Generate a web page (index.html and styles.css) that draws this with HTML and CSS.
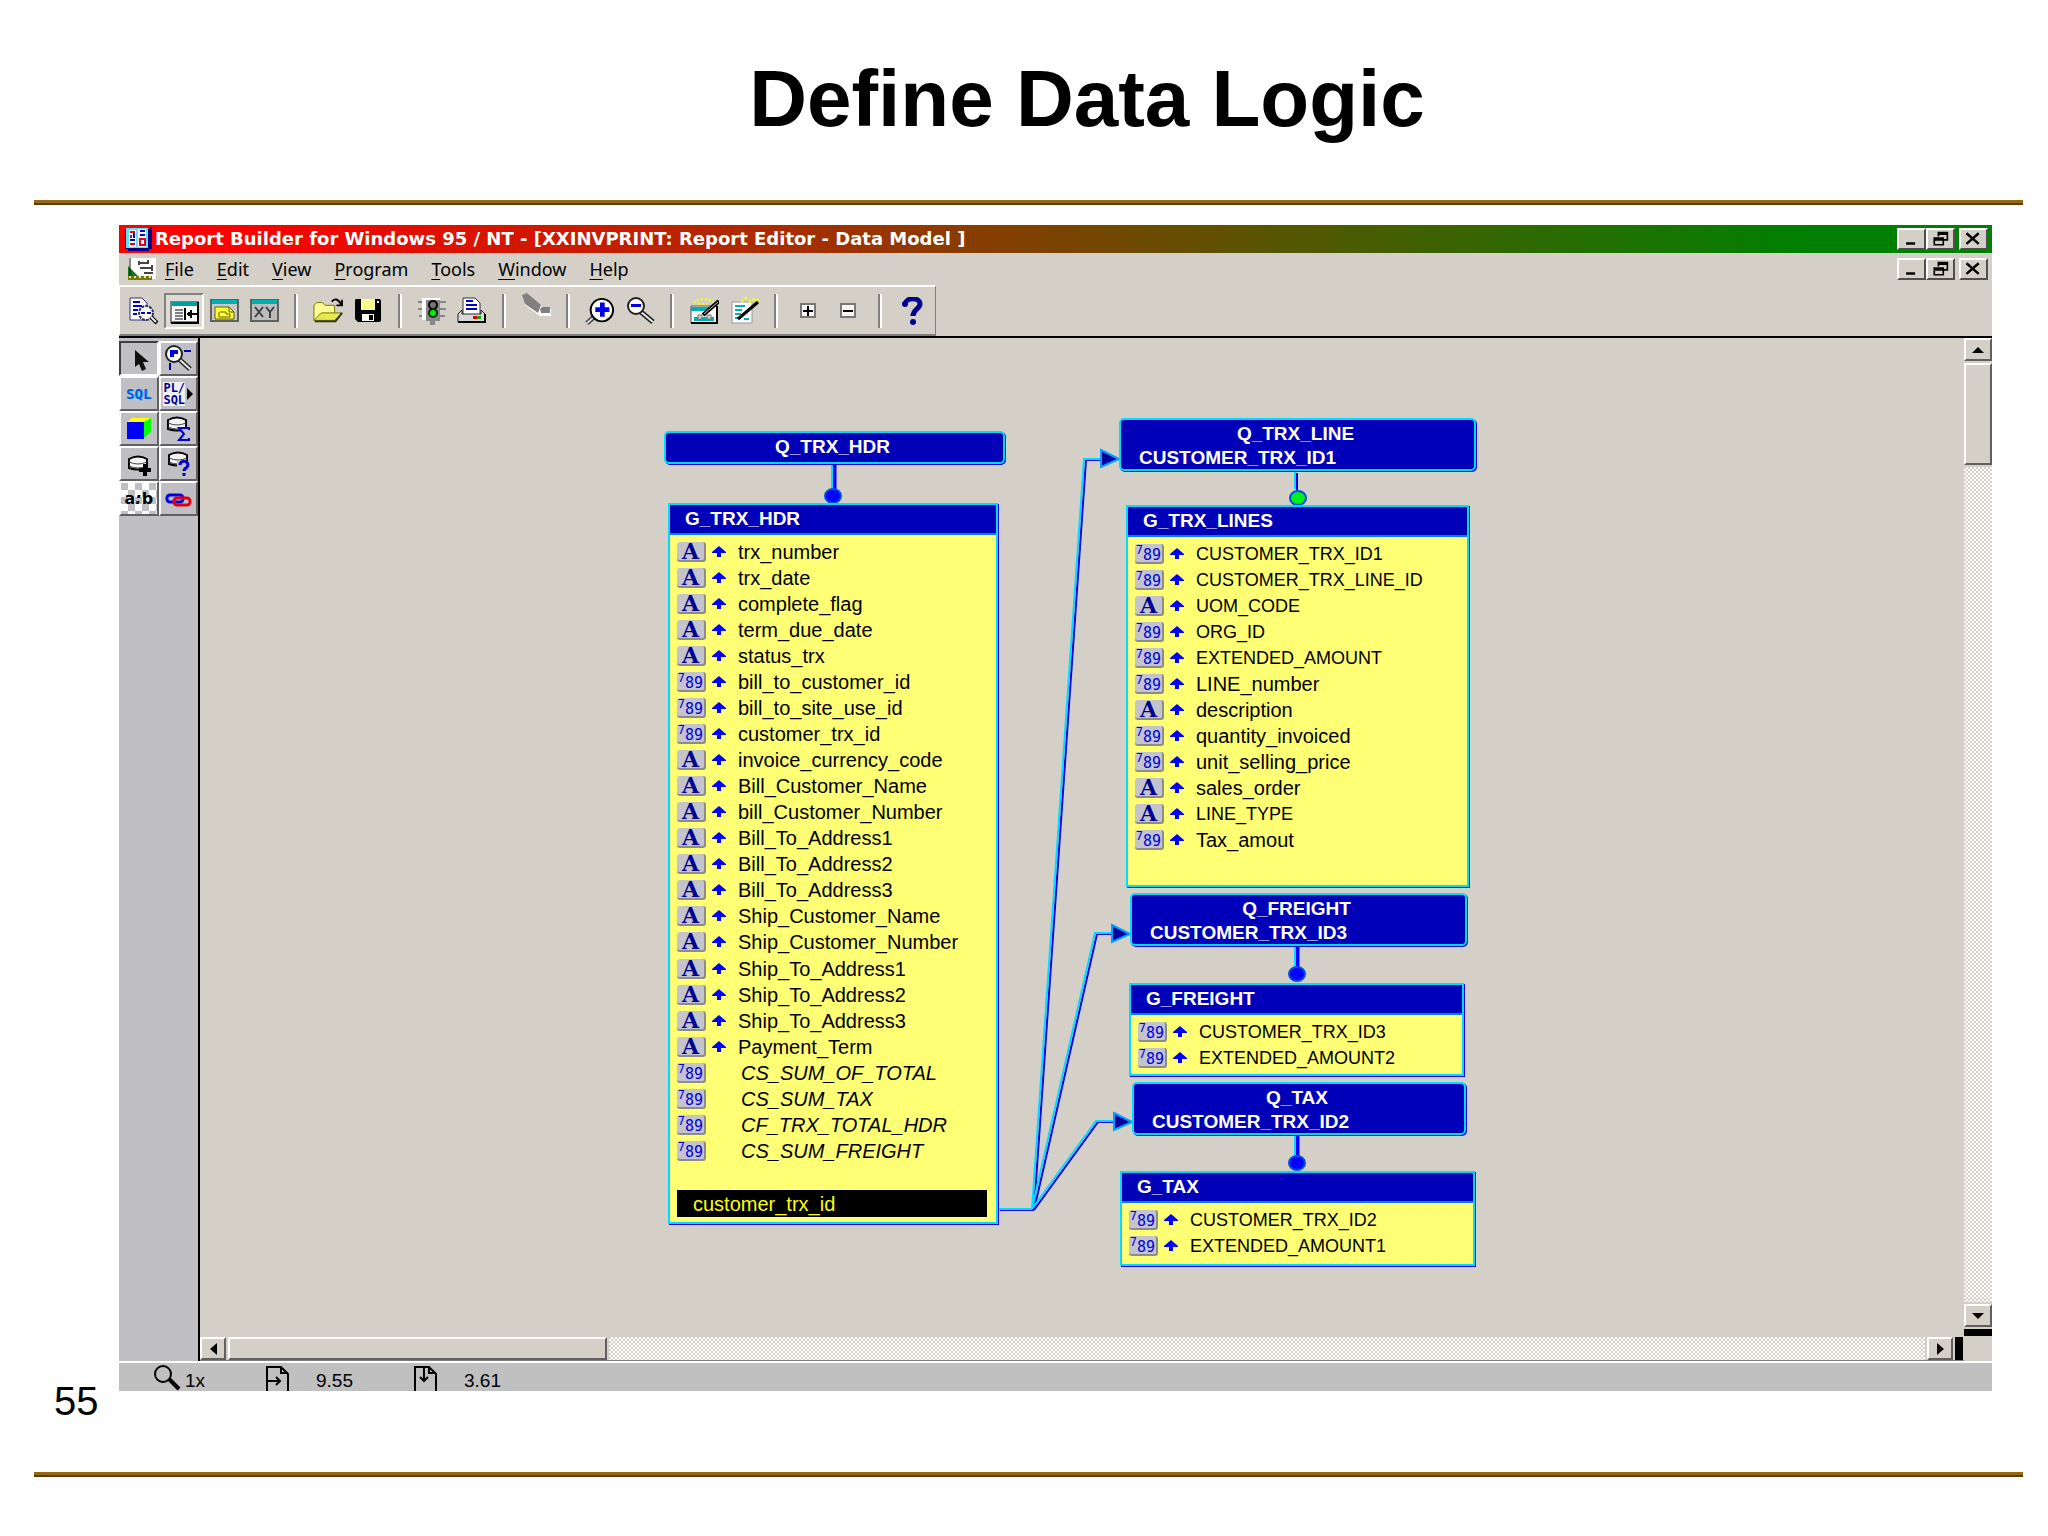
FILE: index.html
```html
<!DOCTYPE html>
<html lang="en">
<head>
    <meta charset="UTF-8">
    <meta name="viewport" content="width=device-width, initial-scale=1.0">
    <title>Define Data Logic</title>
    <link rel="stylesheet" href="styles.css">
</head>
<body>
    <header class="slide-header">
        <h1>Define Data Logic</h1>
    </header>
    <hr class="rule">

    <main class="slide-body">
        <p class="slide-number">55</p>

        <section class="window">
            <div class="title-bar">
                <svg class="app-icon" viewBox="0 0 30 26">
                    <path fill="#000080" d="M2 3h24v-2h3v22h-3v2H5v-2H2z"/>
                    <path fill="#5ce1ff" d="M3 2h22v20H3z"/>
                    <path fill="#fff" d="M6 4h7v17H6zM15 3h8v18h-8z"/>
                    <path stroke="#e00020" stroke-width="2" fill="none" d="M7 6h5M7 18h5M17 13h5v6h-5zM8 9v3"/>
                    <path stroke="#0000d0" stroke-width="2" fill="none" d="M7 14h5M17 5h5M17 9h5M11 7v5"/>
                </svg>
                <h2>Report Builder for Windows 95 / NT - [XXINVPRINT: Report Editor - Data Model ]</h2>
                <div class="window-buttons">
                    <button aria-label="Minimize"><svg viewBox="0 0 28 22"><path d="M8 15h11v3H8z"/></svg></button>
                    <button aria-label="Restore"><svg viewBox="0 0 28 22"><path fill="none" stroke="#000" stroke-width="2" d="M12 8V3h11v9h-5M7 10h11v8H7zM12 5h11M7 12h11"/></svg></button>
                    <button class="close" aria-label="Close"><svg viewBox="0 0 28 22"><path fill="none" stroke="#000" stroke-width="3" d="M6 4l15 13M21 4L6 17"/></svg></button>
                </div>
            </div>

            <div class="menu-bar">
                <svg class="doc-icon" viewBox="0 0 30 24">
                    <path fill="#fff" d="M3 1h27v21H3z"/>
                    <path fill="#087a20" d="M2 9l10 10v4H2z"/>
                    <path fill="#7a7a00" d="M2 19h24v4H2z"/>
                    <path stroke="#111" stroke-width="1" fill="none" d="M4 1v18"/>
                    <path stroke="#444" stroke-width="2" fill="none" d="M13 4v4M12 6h10M14 11h13M18 16h9M22 3v4M26 8v6"/>
                    <path stroke="#ddd" stroke-width="2" stroke-dasharray="2 3" d="M3 20h22"/>
                </svg>
                <nav>
                    <a href="#"><u>F</u>ile</a>
                    <a href="#"><u>E</u>dit</a>
                    <a href="#"><u>V</u>iew</a>
                    <a href="#"><u>P</u>rogram</a>
                    <a href="#"><u>T</u>ools</a>
                    <a href="#"><u>W</u>indow</a>
                    <a href="#"><u>H</u>elp</a>
                </nav>
                <div class="window-buttons">
                    <button aria-label="Minimize report"><svg viewBox="0 0 28 22"><path d="M8 15h11v3H8z"/></svg></button>
                    <button aria-label="Restore report"><svg viewBox="0 0 28 22"><path fill="none" stroke="#000" stroke-width="2" d="M12 8V3h11v9h-5M7 10h11v8H7zM12 5h11M7 12h11"/></svg></button>
                    <button class="close" aria-label="Close report"><svg viewBox="0 0 28 22"><path fill="none" stroke="#000" stroke-width="3" d="M6 4l15 13M21 4L6 17"/></svg></button>
                </div>
            </div>

            <div class="toolbar-row">
                <div class="toolbar">
                    <button aria-label="Run report"><svg viewBox="0 0 30 28">
                        <path fill="#fff" stroke="#303080" d="M1 1h12l5 5v17H1z"/>
                        <path stroke="#0000d0" stroke-width="2" d="M4 5h7M4 9h9M4 13h5M4 17h4"/>
                        <circle cx="17" cy="16" r="7" fill="#fff" stroke="#303060" stroke-width="2" stroke-dasharray="3 1"/>
                        <path stroke="#0000d0" stroke-width="2" d="M12 16h4M18 16h4"/>
                        <path stroke="#000" stroke-width="4" d="M22 20l6 6"/><path stroke="#eee" stroke-width="2" d="M22 20l5 5"/>
                    </svg></button>
                    <button class="pressed" aria-label="Data model"><svg viewBox="0 0 30 28">
                        <path fill="#fff" stroke="#808080" stroke-width="2" d="M2 5h27v20H2z"/>
                        <path fill="#00a0a0" d="M3 5h25v4H3z"/>
                        <path stroke="#000" stroke-width="2" fill="none" d="M29 5v21H2M16 11v12M18 17h10M22 13v8M20 15v4"/>
                        <path stroke="#000" d="M6 13h8M6 16h8M6 19h8M6 22h8"/>
                    </svg></button>
                    <button aria-label="Layout model"><svg viewBox="0 0 30 28">
                        <path fill="#c8c8c8" stroke="#606060" stroke-width="2" d="M2 3h27v21H2z"/>
                        <path fill="#00b0b0" d="M3 3h25v4H3z"/>
                        <path fill="#ffff38" stroke="#606000" d="M6 10h14l5 5v7H6z"/>
                        <path stroke="#606000" fill="none" d="M20 10v5h5M11 15h6v2h4v3H10v-5"/>
                    </svg></button>
                    <button aria-label="Parameter form"><svg viewBox="0 0 30 28">
                        <path fill="#bcbcbc" stroke="#606060" stroke-width="2" d="M2 3h27v21H2z"/>
                        <path fill="#00b0b0" d="M3 3h25v4H3z"/>
                        <path stroke="#404040" stroke-width="2" fill="none" d="M6 10l8 10M14 10L6 20M17 10l4 5 4-5M21 15v6"/>
                    </svg></button>
                    <span class="separator"></span>
                    <button aria-label="Open"><svg viewBox="0 0 32 28">
                        <path fill="#ffff90" stroke="#707000" d="M1 24V8l3-3h6l3 3h10v8"/>
                        <path fill="#e8e850" stroke="#707000" d="M1 24l8-8h22l-8 8z"/>
                        <path stroke="#333300" stroke-width="2" fill="none" d="M2 25h22l7-9"/>
                        <path stroke="#000" stroke-width="2" fill="none" d="M20 4c3-4 7-3 10 3M31 2v6h-6"/>
                    </svg></button>
                    <button aria-label="Save"><svg viewBox="0 0 28 28">
                        <path d="M2 2h24l1 2v20l-2 1H4l-3-3V3z"/>
                        <path fill="#ffff90" d="M7 2h14v11H7z"/>
                        <path fill="#fff" d="M23 4h2v2h-2z"/><path fill="#fff" d="M8 17h12v7H8z"/><path d="M15 18h4v5h-4z"/>
                    </svg></button>
                    <span class="separator"></span>
                    <button aria-label="Compile"><svg viewBox="0 0 30 28">
                        <path fill="#888" d="M1 4h6v2H1zM23 4h6v2h-6zM1 11h6v2H1zM23 11h6v2h-6zM2 18h5v2H2zM23 18h5v2h-5zM13 24h5v4h-5z"/>
                        <path fill="#fff" d="M5 1h4v22H5zM9 1h14v2H9z"/>
                        <path fill="#888" d="M9 3h14v21H9z"/>
                        <circle cx="16" cy="8" r="4" fill="#777" stroke="#000" stroke-width="2"/>
                        <circle cx="16" cy="16" r="4" fill="#00f000" stroke="#002800" stroke-width="2"/>
                    </svg></button>
                    <button aria-label="Print"><svg viewBox="0 0 30 28">
                        <path fill="#fff" stroke="#333" d="M6 1h12l5 5v12H6z"/>
                        <path stroke="#0000c0" stroke-width="2" d="M9 4h7M9 8h11M9 12h11"/>
                        <path fill="#d8d8d8" stroke="#222" d="M1 17l4-4v4h19v-4l4 4v8H1z"/>
                        <path stroke="#000" stroke-width="2" d="M1 25h27v-8" fill="none"/>
                        <path fill="#e00000" d="M16 19h4v3h-4z"/><path fill="#00b000" d="M20 19h4v3h-4z"/>
                    </svg></button>
                    <span class="separator"></span>
                    <button class="raised-icon" disabled aria-label="Clear"><svg viewBox="0 0 30 28">
                        <path fill="#fff" d="M2 4l5-2 14 11v3h9v7H19L4 12z"/>
                        <path fill="#808080" d="M1 2l5-2 14 12-3 8L4 11zM19 16l2-2h8v6h-9z"/>
                    </svg></button>
                    <span class="separator"></span>
                    <button aria-label="Zoom in"><svg viewBox="0 0 32 28">
                        <path stroke="#404040" stroke-width="5" d="M10 20l-8 7"/><path stroke="#e0e0e0" stroke-width="2" d="M10 20l-8 7"/>
                        <circle cx="18" cy="13" r="12" fill="#fff" stroke="#000" stroke-width="2"/>
                        <path fill="#0000e8" d="M16 5h5v5h5v5h-5v5h-5v-5h-5v-5h5z"/>
                    </svg></button>
                    <button aria-label="Zoom out"><svg viewBox="0 0 30 28">
                        <path stroke="#202020" stroke-width="5" d="M16 15l12 10"/><path stroke="#e8e8e8" stroke-width="2" d="M16 15l12 10"/>
                        <circle cx="11" cy="9" r="8" fill="#fff" stroke="#222" stroke-width="2"/>
                        <path fill="#0000e8" d="M6 7h10v3H6z"/>
                    </svg></button>
                    <span class="separator"></span>
                    <button aria-label="Report wizard"><svg viewBox="0 0 30 28">
                        <path fill="#fff" stroke="#555" d="M2 9h26v17H2z"/>
                        <path stroke="#000" stroke-width="2" fill="none" d="M28 9v17H2"/>
                        <path fill="#00b0b0" d="M2 10h18v4H2zM5 20h20v4H5z"/><path fill="#d4d0c8" stroke="#777" d="M9 18h4v4H9zM18 18h4v4h-4z"/>
                        <path stroke="#ffff00" stroke-width="2" stroke-dasharray="2 2" fill="none" d="M5 6c5-5 12-5 20-1M9 7h9"/>
                        <path stroke="#000" stroke-width="4" d="M14 18L30 4"/><path stroke="#ccc" d="M15 17L29 5"/>
                    </svg></button>
                    <button aria-label="Data wizard"><svg viewBox="0 0 30 28">
                        <path fill="#fff" stroke="#999" d="M3 5h20v21H3z"/>
                        <path stroke="#00b0b0" stroke-width="2" d="M6 9h10M6 13h7M6 17h6M6 21h4M15 22h5"/>
                        <path stroke="#ffff00" stroke-width="2" stroke-dasharray="3 2" fill="none" d="M12 5l5-4 5 4 4-4 4 4"/>
                        <path stroke="#000" stroke-width="3" d="M9 22L29 5"/>
                    </svg></button>
                    <span class="separator"></span>
                    <button aria-label="Expand"><svg viewBox="0 0 30 28"><path fill="#f8f8f8" stroke="#777" stroke-width="2" d="M8 7h14v13H8z"/><path stroke="#000" stroke-width="2" d="M10 14h10M15 9v10"/></svg></button>
                    <button aria-label="Collapse"><svg viewBox="0 0 30 28"><path fill="#f8f8f8" stroke="#777" stroke-width="2" d="M8 7h14v13H8z"/><path stroke="#000" stroke-width="2" d="M10 14h10"/></svg></button>
                    <span class="separator"></span>
                    <button aria-label="Help"><svg viewBox="0 0 30 28">
                        <path stroke="#000090" stroke-width="5" fill="none" d="M8 7c1-7 15-7 15 0 0 5-7 5-7 12"/>
                        <circle cx="8" cy="7" r="3" fill="#000090"/><circle cx="16" cy="25" r="3" fill="#000090"/>
                    </svg></button>
                </div>
            </div>

            <div class="workspace">
                <div class="palette">
                    <button class="pressed" aria-label="Select"><svg viewBox="0 0 30 28"><path fill="#111" d="M11 5v17l4-3 3 7 4-2-3-7h6z"/></svg></button>
                    <button aria-label="Magnify"><svg viewBox="0 0 30 28">
                        <path stroke="#0000b0" stroke-width="2" d="M21 6h7M7 18v7"/>
                        <path stroke="#222" stroke-width="5" d="M16 14l11 10"/><path stroke="#e8e8e8" stroke-width="2" d="M16 14l11 10"/>
                        <circle cx="11" cy="9" r="8" fill="#fff" stroke="#222" stroke-width="2"/><path fill="#0000e8" d="M7 5h8v4h-4v3H7z"/>
                    </svg></button>
                    <button class="sql">SQL</button>
                    <button class="plsql"><span>PL/<br>SQL</span><svg viewBox="0 0 6 12"><path d="M0 0l6 6-6 6z"/></svg></button>
                    <button aria-label="Cross product"><svg viewBox="0 0 30 28"><path fill="#ffff00" d="M3 7l5-4h19l-6 4z"/><path fill="#00ff00" d="M20 7l7-4v14l-7 6z"/><path fill="#0000ff" d="M3 7h17v17H3z"/></svg></button>
                    <button aria-label="Summary column"><svg viewBox="0 0 30 28">
                        <path fill="#f4f4f4" stroke="#000" stroke-width="2" d="M5 5q9-5 18 0v9q-9 3-18 0z"/><path stroke="#444" fill="none" d="M5 8q9 4 18 0M5 12q9 4 18 0"/>
                        <path stroke="#0000d0" stroke-width="2" fill="#c0c0c4" d="M26 15v-2H16l5 6-5 6h10v-2"/>
                    </svg></button>
                    <button aria-label="Formula column"><svg viewBox="0 0 30 28">
                        <path fill="#f4f4f4" stroke="#000" stroke-width="2" d="M5 9q9-5 18 0v9q-9 3-18 0z"/><path stroke="#444" fill="none" d="M5 12q9 4 18 0M5 16q9 4 18 0"/>
                        <path d="M19 14h4v4h4v4h-4v4h-4v-4h-4v-4h4z"/>
                    </svg></button>
                    <button aria-label="Placeholder column"><svg viewBox="0 0 30 28">
                        <path fill="#f4f4f4" stroke="#000" stroke-width="2" d="M6 5q9-5 18 0v9q-9 3-18 0z"/><path stroke="#444" fill="none" d="M6 8q9 4 18 0M6 12q9 4 18 0"/>
                        <path fill="#c0c0c4" d="M14 11h13v16H14z"/>
                        <path stroke="#0000c0" stroke-width="3" fill="none" d="M17 15c0-5 8-5 8 0 0 3-4 3-4 6M21 23v3"/>
                    </svg></button>
                    <button class="link-label">a<i>:</i>b</button>
                    <button aria-label="Data link"><svg viewBox="0 0 30 28"><rect x="4" y="10" width="16" height="7" rx="3" fill="none" stroke="#0000e0" stroke-width="3"/><rect x="11" y="13" width="16" height="7" rx="3" fill="none" stroke="#e00010" stroke-width="3"/></svg></button>
                </div>

                <div class="canvas-area">
                    <div class="canvas">
                        <svg class="links">
                            <!-- query to group stems -->
                            <g class="stem">
                                <path d="M634 127v26"/>
                                <path d="M1097 609v22"/>
                                <path d="M1097 798v22"/>
                            </g>
                            <g class="line blue" transform="translate(2 1)">
                                <path d="M1095 134v17"/>
                                <path d="M798 871h34M832 871L884 121h16M832 871L895 595h16M832 871l64-88h18"/>
                            </g>
                            <g class="line cyan">
                                <path d="M632 127v26M1095 134v17M1095 609v22M1095 798v22"/>
                                <path d="M798 871h34M832 871L884 121h16M832 871L895 595h16M832 871l64-88h18"/>
                            </g>
                            <g class="dot">
                                <ellipse cx="633" cy="158" rx="8" ry="7"/>
                                <ellipse class="green" cx="1098" cy="160" rx="8" ry="7"/>
                                <ellipse cx="1097" cy="636" rx="8" ry="7"/>
                                <ellipse cx="1097" cy="825" rx="8" ry="7"/>
                            </g>
                            <g class="arrow">
                                <path d="M901 112l18 9-18 8z"/>
                                <path d="M912 587l18 9-18 8z"/>
                                <path d="M914 775l18 9-18 8z"/>
                            </g>
                        </svg>

                        <div class="query q-hdr"><h3>Q_TRX_HDR</h3></div>
                        <div class="group g-hdr">
                            <h3>G_TRX_HDR</h3>
                            <ul data-group="hdr"></ul>
                            <p class="selected">customer_trx_id</p>
                        </div>

                        <div class="query q-line"><h3>Q_TRX_LINE</h3><p>CUSTOMER_TRX_ID1</p></div>
                        <div class="group g-lines">
                            <h3>G_TRX_LINES</h3>
                            <ul data-group="lines"></ul>
                        </div>

                        <div class="query q-freight"><h3>Q_FREIGHT</h3><p>CUSTOMER_TRX_ID3</p></div>
                        <div class="group g-freight">
                            <h3>G_FREIGHT</h3>
                            <ul data-group="freight"></ul>
                        </div>

                        <div class="query q-tax"><h3>Q_TAX</h3><p>CUSTOMER_TRX_ID2</p></div>
                        <div class="group g-tax">
                            <h3>G_TAX</h3>
                            <ul data-group="tax"></ul>
                        </div>
                    </div>

                    <div class="scroll-v">
                        <button aria-label="Scroll up"><svg viewBox="0 0 14 8"><path d="M1 7l6-6 6 6z"/></svg></button>
                        <div class="thumb"></div>
                        <div class="track"></div>
                        <button aria-label="Scroll down"><svg viewBox="0 0 14 8"><path d="M1 1h12L7 7z"/></svg></button>
                        <div class="split"></div>
                    </div>
                    <div class="scroll-h">
                        <button aria-label="Scroll left"><svg viewBox="0 0 8 14"><path d="M8 1v12L1 7z"/></svg></button>
                        <div class="thumb"></div>
                        <div class="track"></div>
                        <button aria-label="Scroll right"><svg viewBox="0 0 8 14"><path d="M1 1l7 6-7 6z"/></svg></button>
                        <div class="split"></div>
                    </div>
                    <div class="corner"></div>
                </div>
            </div>

            <footer class="status-bar">
                <div class="zoom-level">
                    <svg viewBox="0 0 28 26"><circle cx="10" cy="9" r="8" fill="none" stroke="#000" stroke-width="2"/><path stroke="#000" stroke-width="4" d="M16 14l10 10"/></svg>
                    <span>1x</span>
                </div>
                <div class="position">
                    <svg viewBox="0 0 26 26"><path fill="none" stroke="#000" stroke-width="2" d="M2 26V2h14l7 7v17M16 2v6h7M2 16h13M11 12l4 4-4 4"/></svg>
                    <span>9.55</span>
                </div>
                <div class="position">
                    <svg viewBox="0 0 26 26"><path fill="none" stroke="#000" stroke-width="2" d="M2 26V2h14l7 7v17M16 2v6h7M11 2v14M7 12l4 4 4-4"/></svg>
                    <span>3.61</span>
                </div>
            </footer>
        </section>
    </main>
    <hr class="rule">

    <script>
        // type: A = character, N = number, S = summary/formula column
        const groups = {
            hdr: [
                ['A', 'trx_number'], ['A', 'trx_date'], ['A', 'complete_flag'],
                ['A', 'term_due_date'], ['A', 'status_trx'], ['N', 'bill_to_customer_id'],
                ['N', 'bill_to_site_use_id'], ['N', 'customer_trx_id'], ['A', 'invoice_currency_code'],
                ['A', 'Bill_Customer_Name'], ['A', 'bill_Customer_Number'], ['A', 'Bill_To_Address1'],
                ['A', 'Bill_To_Address2'], ['A', 'Bill_To_Address3'], ['A', 'Ship_Customer_Name'],
                ['A', 'Ship_Customer_Number'], ['A', 'Ship_To_Address1'], ['A', 'Ship_To_Address2'],
                ['A', 'Ship_To_Address3'], ['A', 'Payment_Term'], ['S', 'CS_SUM_OF_TOTAL'],
                ['S', 'CS_SUM_TAX'], ['S', 'CF_TRX_TOTAL_HDR'], ['S', 'CS_SUM_FREIGHT']
            ],
            lines: [
                ['N', 'CUSTOMER_TRX_ID1'], ['N', 'CUSTOMER_TRX_LINE_ID'], ['A', 'UOM_CODE'],
                ['N', 'ORG_ID'], ['N', 'EXTENDED_AMOUNT'], ['N', 'LINE_number'],
                ['A', 'description'], ['N', 'quantity_invoiced'], ['N', 'unit_selling_price'],
                ['A', 'sales_order'], ['A', 'LINE_TYPE'], ['N', 'Tax_amout']
            ],
            freight: [['N', 'CUSTOMER_TRX_ID3'], ['N', 'EXTENDED_AMOUNT2']],
            tax: [['N', 'CUSTOMER_TRX_ID2'], ['N', 'EXTENDED_AMOUNT1']]
        };

        const arrow = '<svg class="break-arrow" viewBox="0 0 14 12"><path d="M7 0l7 6v1H9v4H5V7H0V6z"/></svg>';

        document.querySelectorAll('[data-group]').forEach(list => {
            groups[list.dataset.group].forEach(([type, name]) => {
                const li = document.createElement('li');
                const badge = type === 'A'
                    ? '<span class="badge char">A</span>'
                    : '<span class="badge num"><sup>7</sup>89</span>';
                li.innerHTML = badge + (type === 'S' ? '' : arrow) + '<span class="name">' + name + '</span>';
                if (type === 'S') {
                    li.classList.add('computed');
                } else if (name === name.toUpperCase()) {
                    li.classList.add('upper');
                }
                list.appendChild(li);
            });
        });
    </script>
</body>
</html>
```
FILE: styles.css
```css
* {
    margin: 0;
    padding: 0;
    box-sizing: border-box;
}

body {
    font-family: "Liberation Sans", Arial, sans-serif;
    background: #ffffff;
    color: #000000;
    min-height: 100vh;
    display: flex;
    flex-direction: column;
    padding-bottom: 59px;
}

button {
    font: inherit;
    color: inherit;
    border: none;
    background: none;
}

svg {
    display: block;
}

/* Slide */
.slide-header {
    height: 200px;
    padding: 51px 0 0 126px;
}

h1 {
    font-size: 80px;
    line-height: 96px;
    text-align: center;
}

.rule {
    height: 5px;
    margin: 0 25px 0 34px;
    border: none;
    border-top: 3px solid #94690f;
    background: #5e3b05;
    flex: none;
}

.slide-body {
    flex: 1;
    display: grid;
    grid-template-columns: 119px 1fr;
    padding: 20px 56px 0 0;
}

.slide-number {
    align-self: end;
    padding-left: 54px;
    margin-bottom: 47px;
    font-size: 40px;
    line-height: 48px;
}

/* Window */
.window {
    display: flex;
    flex-direction: column;
    min-width: 0;
    margin-bottom: 81px;
    background: #d4d0c8;
}

.title-bar {
    display: flex;
    align-items: center;
    height: 28px;
    padding: 0 4px;
    background: linear-gradient(to right, #ff0000 5%, #c81c00 25%, #8a3c00 45%, #008000 90%);
}

.app-icon {
    width: 30px;
    height: 26px;
}

.title-bar h2 {
    flex: 1;
    padding-left: 2px;
    color: #ffffff;
    font-family: "DejaVu Sans", sans-serif;
    font-size: 18px;
    line-height: 28px;
}

.window-buttons {
    display: flex;
}

.window-buttons button {
    width: 29px;
    height: 22px;
    border: 2px solid;
    border-color: #ffffff #505050 #505050 #ffffff;
    background: #d4d0c8;
}

.window-buttons .close {
    margin-left: 4px;
}

.window-buttons svg {
    width: 24px;
    height: 18px;
}

.menu-bar {
    display: flex;
    align-items: center;
    height: 32px;
    padding: 0 4px 0 7px;
}

.doc-icon {
    width: 30px;
    height: 24px;
}

.menu-bar nav {
    flex: 1;
    display: flex;
    gap: 23px;
    padding-left: 9px;
    font-family: "Noto Sans", sans-serif;
    font-size: 18px;
    line-height: 28px;
}

.menu-bar a {
    color: #000000;
    text-decoration: none;
}

.menu-bar u {
    text-underline-offset: 3px;
}

/* Toolbar */
.toolbar-row {
    display: flex;
    border-bottom: 2px solid #000000;
}

.toolbar {
    display: flex;
    align-items: center;
    height: 51px;
    padding: 0 3px 0 4px;
    border: 1px solid;
    border-color: #ffffff #808080 #808080 #ffffff;
    border-top-width: 2px;
    border-bottom-width: 2px;
}

.toolbar button {
    display: flex;
    align-items: center;
    justify-content: center;
    width: 40px;
    height: 36px;
}

.toolbar svg {
    width: 30px;
    height: 28px;
}

.toolbar .pressed {
    border: 2px solid;
    border-color: #808080 #ffffff #ffffff #808080;
    background: #dedad4;
}

.toolbar .raised-icon {
    padding-bottom: 8px;
}

.separator {
    width: 4px;
    height: 34px;
    margin: 0 10px;
    border-left: 2px solid #808080;
    border-right: 2px solid #ffffff;
}

/* Workspace */
.workspace {
    flex: 1;
    display: flex;
}

.palette {
    flex: none;
    width: 81px;
    padding-top: 3px;
    border-right: 2px solid #000000;
    background: #c0c0c4;
    display: grid;
    grid-template-columns: repeat(2, minmax(0, 1fr));
    grid-auto-rows: 35px;
    align-content: start;
}

.palette button {
    display: flex;
    align-items: center;
    justify-content: center;
    border: 2px solid;
    border-color: #ffffff #606060 #606060 #ffffff;
}

.palette .pressed {
    border-color: #404040 #ffffff #ffffff #404040;
}

.palette svg {
    flex: none;
    width: 30px;
    height: 28px;
}

.palette .sql {
    color: #0058e0;
    font: bold 14px "DejaVu Sans Mono", monospace;
    text-shadow: 1px 0 #30c8ff;
}

.palette .plsql {
    gap: 2px;
    color: #000090;
    font: bold 12px/12px "DejaVu Sans Mono", monospace;
    text-align: left;
}

.plsql span {
    background: #f0f0f4;
}

.palette .plsql svg {
    width: 6px;
    height: 12px;
}

.palette .link-label {
    font: bold 16px "DejaVu Sans", sans-serif;
    background: repeating-conic-gradient(#ffffff 0 25%, #c0c0c4 0 50%) 0 0 / 14px 14px;
}

.canvas-area {
    flex: 1;
    min-width: 0;
    display: grid;
    grid-template-columns: 1fr 28px;
    grid-template-rows: 1fr 24px;
}

.canvas {
    position: relative;
    overflow: hidden;
    min-height: 940px;
}

/* Diagram */
.links {
    position: absolute;
    width: 100%;
    height: 100%;
}

.links .line {
    fill: none;
    stroke-width: 2px;
}

.links .blue {
    stroke: #0000e0;
}

.links .cyan {
    stroke: #00dcff;
}

.links .stem {
    stroke: #0000ff;
    stroke-width: 5px;
}

.links .dot {
    fill: #0000ff;
    stroke: #0050e0;
    stroke-width: 2px;
}

.links .green {
    fill: #00f020;
}

.links .arrow {
    fill: #0000a0;
    stroke: #00a0ff;
    stroke-width: 2px;
}

.query,
.group {
    position: absolute;
    border: 2px solid #00dcff;
    box-shadow: 1px 1px #0000e0;
}

.query {
    padding: 2px 0;
    border-radius: 5px;
    background: #0000b8;
    color: #ffffff;
    font-size: 19px;
    font-weight: bold;
    line-height: 24px;
}

.query h3 {
    padding-right: 4px;
    font-size: 19px;
    text-align: center;
}

.query p {
    padding-left: 18px;
}

.group {
    background: repeating-conic-gradient(#ffff66 0 25%, #ffff84 0 50%) 0 0 / 4px 4px;
}

.group h3 {
    height: 30px;
    padding-left: 15px;
    border-bottom: 2px solid #0080ff;
    background: #0000b8;
    color: #ffffff;
    font-size: 19px;
    line-height: 28px;
}

.group ul {
    display: flex;
    flex-direction: column;
    justify-content: space-between;
    padding: 4px 0 0 7px;
    list-style: none;
}

.group li {
    display: flex;
    align-items: center;
    height: 26px;
    font-size: 20px;
    line-height: 26px;
}

.group .upper {
    font-size: 18px;
}

.group .computed {
    font-style: italic;
}

.badge {
    width: 29px;
    height: 20px;
    border-right: 2px solid #8c8c8c;
    border-bottom: 2px solid #8c8c8c;
    border-radius: 3px;
    background: #c4c4cc;
    font-style: normal;
    text-align: center;
}

.badge.char {
    color: #000090;
    font: bold 22px/18px "DejaVu Serif", serif;
}

.badge.num {
    color: #0000e0;
    font: 15px/18px "DejaVu Sans Mono", monospace;
}

.badge sup {
    font-size: 12px;
    line-height: 12px;
}

.break-arrow {
    width: 14px;
    height: 12px;
    margin: 0 12px 0 6px;
    fill: #0000ff;
}

.computed .name {
    padding-left: 35px;
}

.selected {
    height: 27px;
    margin: 26px 9px 0 7px;
    padding-left: 16px;
    background: #000000;
    color: #ffff00;
    font-size: 20px;
    line-height: 28px;
}

.q-hdr { left: 464px; top: 93px; width: 341px; height: 33px; }
.g-hdr { left: 468px; top: 165px; width: 330px; height: 721px; }
.q-line { left: 919px; top: 80px; width: 357px; height: 53px; }
.g-lines { left: 926px; top: 167px; width: 343px; height: 382px; }
.q-freight { left: 930px; top: 555px; width: 337px; height: 53px; }
.g-freight { left: 929px; top: 645px; width: 335px; height: 93px; }
.q-tax { left: 932px; top: 744px; width: 334px; height: 53px; }
.g-tax { left: 920px; top: 833px; width: 355px; height: 95px; }

.g-hdr ul {
    height: 629px;
}

/* Scrollbars */
.scroll-v,
.scroll-h {
    display: flex;
    gap: 2px;
}

.scroll-v {
    flex-direction: column;
}

.scroll-v button,
.scroll-h button,
.thumb {
    flex: none;
    display: flex;
    align-items: center;
    justify-content: center;
    border: 2px solid;
    border-color: #ffffff #606060 #606060 #ffffff;
    background: #d4d0c8;
}

.scroll-v button {
    height: 23px;
}

.scroll-h button {
    width: 26px;
}

.scroll-v svg {
    width: 14px;
    height: 8px;
}

.scroll-h svg {
    width: 8px;
    height: 14px;
}

.scroll-v .thumb {
    height: 102px;
}

.scroll-h .thumb {
    width: 379px;
}

.track {
    flex: 1;
    background: repeating-conic-gradient(#ffffff 0 25%, #d4d0c8 0 50%) 0 0 / 4px 4px;
}

.split {
    flex: none;
    background: #000000;
}

.scroll-v .split {
    height: 7px;
    margin-bottom: 1px;
}

.scroll-h .split {
    width: 8px;
    margin-right: 1px;
}

.scroll-h {
    border-bottom: 1px solid #808080;
}

/* Status bar */
.status-bar {
    display: flex;
    height: 30px;
    padding: 2px 0 0 34px;
    border-top: 2px solid #ffffff;
    background: #c0c0c0;
    font-size: 19px;
    line-height: 32px;
    overflow: hidden;
}

.status-bar svg {
    width: 28px;
    height: 26px;
}

.zoom-level,
.position {
    display: flex;
}

.zoom-level {
    width: 111px;
    gap: 4px;
}

.position {
    width: 148px;
    gap: 24px;
}
```
